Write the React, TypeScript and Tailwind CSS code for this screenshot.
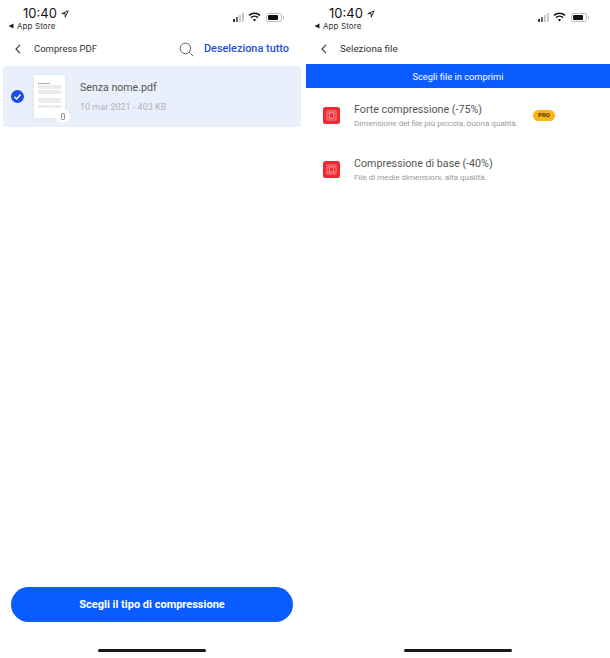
const font = "font-['Roboto',sans-serif]";

function StatusBar() {
  return (
    <div className="flex h-[36px] justify-between">
      <div className="flex flex-col pl-[8px] pt-[5px]">
        <div className="flex items-center pl-[15px] gap-[4px] h-[17px]">
          <span className="font-['Inter',sans-serif] text-[13px] leading-[17px] text-[#111]">10:40</span>
          <svg width="8" height="8" viewBox="0 0 10 10" fill="none" stroke="#222" strokeWidth="1.2">
            <path d="M9 1 1 4.6h4.2V9z" strokeLinejoin="round" />
          </svg>
        </div>
        <div className="flex items-center gap-[3px] h-[12px] -mt-[2px]">
          <svg width="6" height="6" viewBox="0 0 6 6" fill="#222">
            <path d="M5.5 0.5v5L0.5 3z" />
          </svg>
          <span className="font-['Inter',sans-serif] text-[8px] leading-[12px] text-[#333] tracking-[0.1px]">App Store</span>
        </div>
      </div>
      <div className="flex items-center gap-[4px] pr-[21px] h-[34px]">
        <div className="flex items-end gap-[1px] h-[9px]">
          <div className="w-[2px] h-[3px] bg-[#333]" />
          <div className="w-[2px] h-[5px] bg-[#666]" />
          <div className="w-[2px] h-[7px] bg-[#c8c8c8]" />
          <div className="w-[2px] h-[9px] bg-[#c8c8c8]" />
        </div>
        <svg width="13" height="10" viewBox="0 0 13 10" fill="none" stroke="#111" strokeWidth="1.5">
          <path d="M1 3.4a8 8 0 0 1 11 0" />
          <path d="M3 5.6a5 5 0 0 1 7 0" />
          <path d="M6.5 9.6 4.9 7.8a2.3 2.3 0 0 1 3.2 0z" fill="#111" stroke="none" />
        </svg>
        <div className="flex items-center ml-[1px]">
          <div className="w-[16px] h-[9px] rounded-[2.5px] border border-[#bbb] p-[1px]">
            <div className="w-[10px] h-full bg-[#111] rounded-[1px]" />
          </div>
          <div className="w-[1px] h-[3px] bg-[#bbb] ml-[1px]" />
        </div>
      </div>
    </div>
  );
}

function Back() {
  return (
    <svg width="6" height="10" viewBox="0 0 6 10" fill="none" stroke="#333" strokeWidth="1.1">
      <path d="M5 .8 1 5l4 4.2" />
    </svg>
  );
}

function DocThumb() {
  return (
    <div className="relative w-[31px] h-[43px] bg-white shadow-[0_0_3px_rgba(0,0,0,0.08)] px-[4px] pt-[8px]">
      <div className="w-[12px] h-[1px] bg-[#aaa]" />
      <div className="h-[4px] bg-[#ececec] mt-[1px]" />
      <div className="h-[4px] bg-[#ececec] mt-[1px]" />
      <div className="h-[5px] bg-[#ececec] mt-[4px]" />
      <div className="flex gap-[1px] mt-[2px]">
        <div className="h-[3px] flex-1 bg-[#ececec]" />
        <div className="h-[3px] w-[10px] bg-[#ececec]" />
      </div>
      <div className="absolute -right-[5px] -bottom-[5px] w-[14px] h-[14px] rounded-full bg-white flex items-center justify-center">
        <div className="w-[4px] h-[7px] border border-[#999] rounded-[1px]" />
      </div>
    </div>
  );
}

function RedIcon() {
  return (
    <div className="w-[17px] h-[17px] rounded-[2.5px] bg-[#ee2b33] flex items-center justify-center shrink-0">
      <svg width="11" height="11" viewBox="0 0 11 11" fill="none" stroke="#f9b4b6" strokeWidth="0.9">
        <path d="M1 1h9v9H1z" strokeOpacity="0.75" />
        <path d="M2.8 2.8h5.4l-.8 2.7.8 2.7H2.8l.8-2.7z" />
      </svg>
    </div>
  );
}

function Option({ title, sub, pro }: { title: string; sub: string; pro?: boolean }) {
  return (
    <div className="flex items-center h-[26px] pl-[18px]">
      <RedIcon />
      <div className="ml-[14px] w-[179px] shrink-0 pt-[2px]">
        <div className="text-[10.7px] leading-[14px] text-[#555]">{title}</div>
        <div className="text-[8.1px] leading-[12px] text-[#9a9a9a] whitespace-nowrap">{sub}</div>
      </div>
      {pro && (
        <div className="w-[22px] h-[11px] rounded-full bg-[#fbb515] flex items-center justify-center text-[6px] font-bold leading-none text-[#4a3300]">
          PRO
        </div>
      )}
    </div>
  );
}

export default function App() {
  return (
    <div className={`flex w-[610px] h-[658px] bg-white overflow-hidden ${font}`}>
      <div className="w-[305px] h-full flex flex-col">
        <StatusBar />
        <div className="flex items-center h-[26px] pl-[15px] pr-[16px]">
          <Back />
          <span className="ml-[13px] text-[9.5px] text-[#333]">Compress PDF</span>
          <svg className="ml-auto" width="15" height="15" viewBox="0 0 16 16" fill="none" stroke="#444" strokeWidth="0.9">
            <circle cx="6.8" cy="6.8" r="5.6" />
            <path d="m10.8 10.8 4.4 4.4" />
          </svg>
          <span className="ml-[10px] text-[10.9px] font-medium text-[#1f4fd8]">Deseleziona tutto</span>
        </div>
        <div className="ml-[3px] w-[298px] mt-[4px] h-[61px] rounded-[3px] bg-[#e9effb] flex items-center pl-[8px]">
          <svg width="13" height="13" viewBox="0 0 13 13">
            <circle cx="6.5" cy="6.5" r="6.5" fill="#1a50e0" />
            <path d="m3.4 6.7 2.2 2.2 4-4.4" fill="none" stroke="#fff" strokeWidth="1.4" />
          </svg>
          <div className="ml-[10px]">
            <DocThumb />
          </div>
          <div className="ml-[15px]">
            <div className="text-[10.6px] leading-[15px] text-[#555]">Senza nome.pdf</div>
            <div className="text-[9px] leading-[12px] text-[#b0b3ba] mt-[6px]">10 mar 2021 - 403 KB</div>
          </div>
        </div>
        <div className="mt-auto mx-[11px] w-[282px] h-[35px] pt-[2px] rounded-full bg-[#0a5cff] flex items-center justify-center text-[11px] font-bold text-white">
          Scegli il tipo di compressione
        </div>
        <div className="mt-[27px] mb-[6px] ml-[98px] w-[108px] h-[3px] rounded-full bg-[#1a1a1a]" />
      </div>
      <div className="w-[305px] h-full flex flex-col">
        <div className="pl-[1px]">
          <StatusBar />
        </div>
        <div className="flex items-center h-[26px] pl-[16px]">
          <Back />
          <span className="ml-[13px] text-[9.8px] text-[#333]">Seleziona file</span>
        </div>
        <div className="ml-[1px] mt-[2px] h-[24px] pt-[1px] bg-[#0a5cff] flex items-center justify-center text-[9.3px] text-white">
          Scegli file in comprimi
        </div>
        <div className="mt-[14px] flex flex-col gap-[28px]">
          <Option title="Forte compressione (-75%)" sub="Dimensione del file più piccola, buona qualità." pro />
          <Option title="Compressione di base (-40%)" sub="File di medie dimensioni, alta qualità." />
        </div>
        <div className="mt-auto mb-[6px] ml-[99px] w-[108px] h-[3px] rounded-full bg-[#1a1a1a]" />
      </div>
    </div>
  );
}
